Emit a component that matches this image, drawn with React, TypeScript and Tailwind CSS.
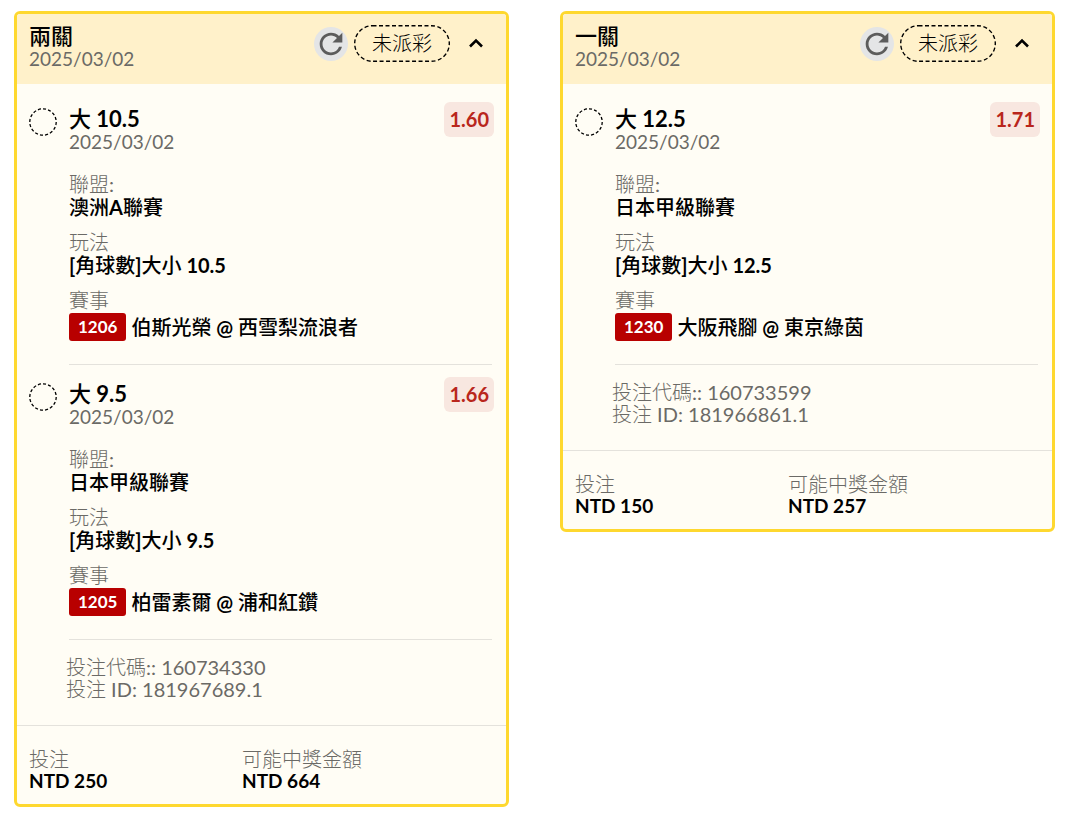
import { MdRefresh } from 'react-icons/md'

type Leg = { pick: string; date: string; odds: string; league: string; market: string; code: string; match: string }
type Bet = { title: string; date: string; legs: Leg[]; betCode: string; betId: string; stake: string; payout: string }

const bets: Bet[] = [
  {
    title: '兩關',
    date: '2025/03/02',
    legs: [
      { pick: '大 10.5', date: '2025/03/02', odds: '1.60', league: '澳洲A聯賽', market: '[角球數]大小 10.5', code: '1206', match: '伯斯光榮 @ 西雪梨流浪者' },
      { pick: '大 9.5', date: '2025/03/02', odds: '1.66', league: '日本甲級聯賽', market: '[角球數]大小 9.5', code: '1205', match: '柏雷素爾 @ 浦和紅鑽' },
    ],
    betCode: '160734330',
    betId: '181967689.1',
    stake: 'NTD 250',
    payout: 'NTD 664',
  },
  {
    title: '一關',
    date: '2025/03/02',
    legs: [
      { pick: '大 12.5', date: '2025/03/02', odds: '1.71', league: '日本甲級聯賽', market: '[角球數]大小 12.5', code: '1230', match: '大阪飛腳 @ 東京綠茵' },
    ],
    betCode: '160733599',
    betId: '181966861.1',
    stake: 'NTD 150',
    payout: 'NTD 257',
  },
]

// Latin and CJK weights differ, so each text style names its own CJK face
const muted = "font-[Lato,'Noto_Sans_CJK_TC_Light','Noto_Sans_CJK_TC',sans-serif] font-normal text-[#6b6a66]"
const strong = "font-[Lato,'Noto_Sans_CJK_TC_Medium','Noto_Sans_CJK_TC',sans-serif] font-bold"

function LegRow({ leg }: { leg: Leg }) {
  return (
    <div className="flex gap-3 pl-3">
      <svg className="w-7 h-7 mt-px shrink-0" viewBox="0 0 28 28" fill="none" stroke="black" strokeWidth="1.3">
        <circle cx="14" cy="14" r="13.2" pathLength="96" strokeDasharray="3.6 2.4" />
      </svg>
      <div className="flex-1 min-w-0">
        <div className="flex justify-between items-start pr-3">
          <div>
            <h3 className={`text-[22px] ${strong}`}>{leg.pick}</h3>
            <p className={`text-[19px] ${muted}`}>{leg.date}</p>
          </div>
          <span className="-mt-[5px] rounded-md bg-[#f8e7e0] px-[5px] leading-[35px] font-bold text-[#b9261c]">{leg.odds}</span>
        </div>
        <dl className="mt-5 mr-3.5 pb-[23px] border-b border-[#e4e2dc]">
          <dt className={muted}>聯盟:</dt>
          <dd className={`mb-3 ${strong}`}>{leg.league}</dd>
          <dt className={muted}>玩法</dt>
          <dd className={`mb-3 ${strong}`}>{leg.market}</dd>
          <dt className={muted}>賽事</dt>
          <dd className={`mt-px flex items-center gap-[5px] ${strong}`}>
            <span className="rounded-[3px] bg-[#b80000] px-[9px] text-[17px] leading-7 text-white">{leg.code}</span>
            {leg.match}
          </dd>
        </dl>
      </div>
    </div>
  )
}

function BetCard({ bet }: { bet: Bet }) {
  return (
    <section className="rounded-md border-3 border-[#fed82f] bg-[#fffdf5] overflow-hidden">
      <header className="flex justify-between items-start bg-[#fff1ca] px-3 pt-[10px] pb-[14px]">
        <div>
          <h2 className={`text-[22px] ${strong}`}>{bet.title}</h2>
          <p className={`text-[19px] ${muted}`}>{bet.date}</p>
        </div>
        <div className="flex items-center pt-px pr-1.5">
          <button aria-label="重新整理" className="w-[34px] h-[34px] mr-1.5 flex items-center justify-center rounded-full bg-[#e4e5e6] text-[#5c5c5c]">
            <MdRefresh size={34} />
          </button>
          <span className="relative h-[37px] px-[18px] leading-9 font-light">
            <svg className="absolute inset-0 w-full h-full" viewBox="0 0 96 37" fill="none" stroke="black" strokeWidth="1.4">
              <rect x="0.7" y="0.7" width="94.6" height="35.6" rx="17.8" strokeDasharray="4 2.5" />
            </svg>
            未派彩
          </span>
          <button aria-label="收合" className="ml-3.5">
            <svg width="24" height="24" viewBox="0 0 24 24" fill="none" stroke="black" strokeWidth="2.6">
              <path d="M6 14.5 12 8.5 18 14.5" />
            </svg>
          </button>
        </div>
      </header>
      <div className="flex flex-col gap-[17px] pt-[23px]">
        {bet.legs.map(leg => <LegRow key={leg.code} leg={leg} />)}
      </div>
      <div className={`pl-[49px] pt-4 pb-[25px] leading-[22px] ${muted}`}>
        <p>投注代碼:: {bet.betCode}</p>
        <p>投注 ID: {bet.betId}</p>
      </div>
      <dl className="flex border-t border-[#e4e2dc] px-3 pt-[22px] pb-3 leading-[22px]">
        <div className="w-[213px]">
          <dt className={muted}>投注</dt>
          <dd className={`text-[19px] ${strong}`}>{bet.stake}</dd>
        </div>
        <div>
          <dt className={muted}>可能中獎金額</dt>
          <dd className={`text-[19px] ${strong}`}>{bet.payout}</dd>
        </div>
      </dl>
    </section>
  )
}

export default function App() {
  return (
    <main className="grid grid-cols-2 items-start gap-[51px] pt-[11px] pb-5 pl-[14px] pr-[25px] bg-white text-black font-[Lato,'Noto_Sans_CJK_TC',sans-serif] text-[20px] leading-[23px] [font-synthesis:none]">
      {bets.map(bet => <BetCard key={bet.betId} bet={bet} />)}
    </main>
  )
}
